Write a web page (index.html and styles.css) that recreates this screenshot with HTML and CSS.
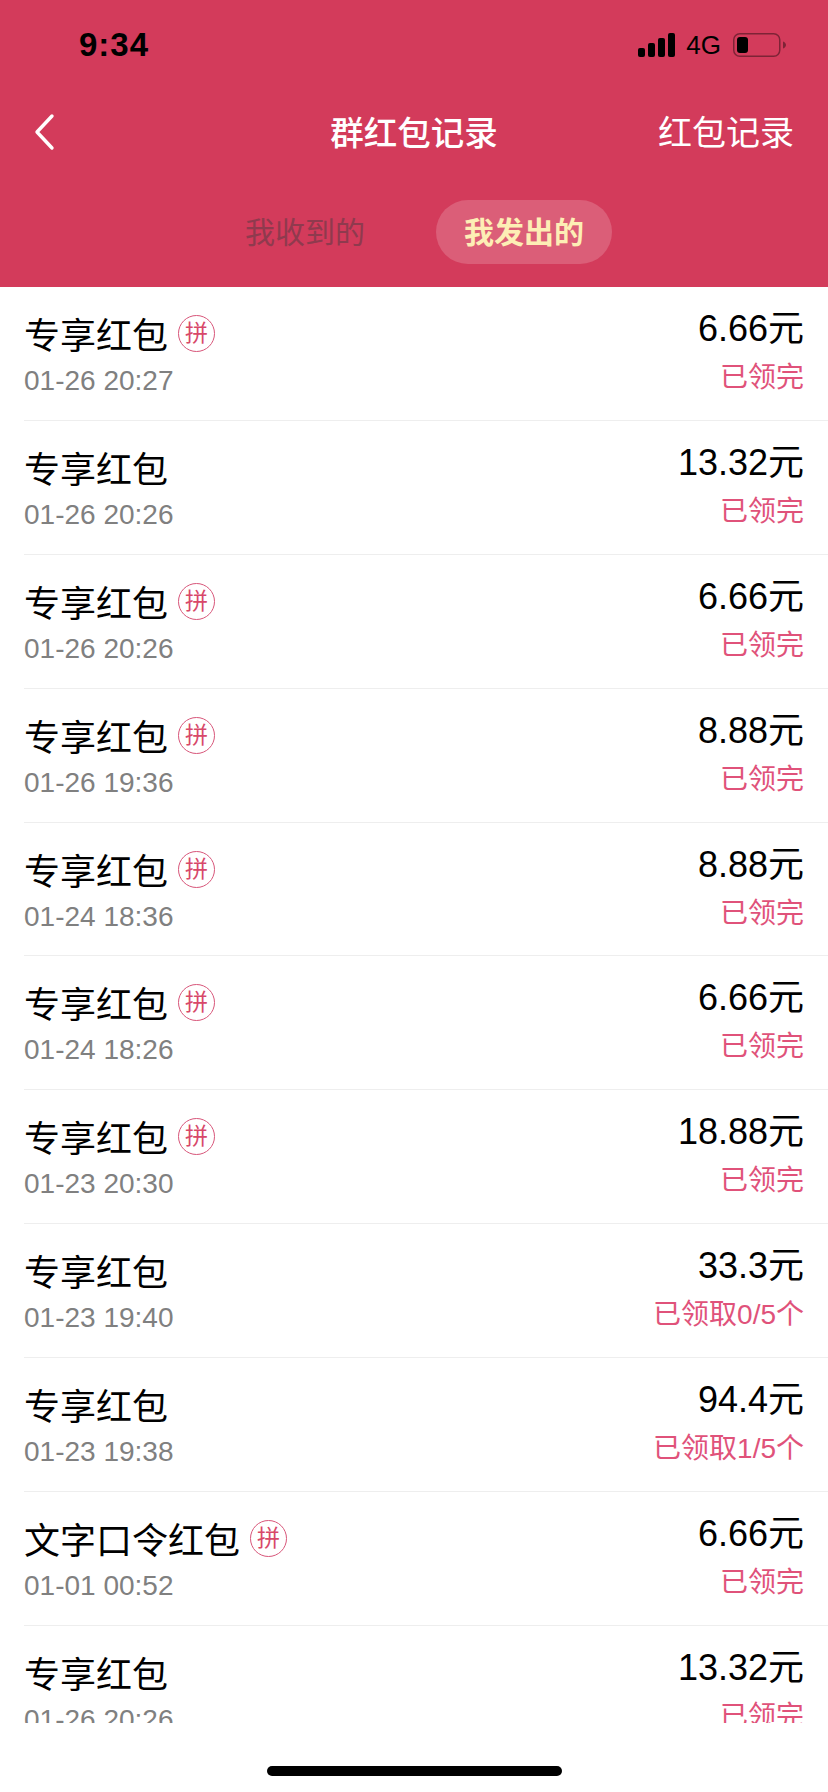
FILE: index.html
```html
<!DOCTYPE html>
<html lang="zh-CN">
<head>
  <meta charset="UTF-8" />
  <meta name="viewport" content="width=device-width, initial-scale=1.0"/>
  <title>群红包记录</title>
  <link rel="stylesheet" href="styles.css">
</head>
<body>
  <div class="header">
    <div class="status-bar">
      <span class="status-time">9:34</span>
      <div class="status-right">
        <svg class="signal" width="37" height="24" viewBox="0 0 37 24">
          <rect x="0" y="15" width="7" height="9" rx="2"/>
          <rect x="10" y="10" width="7" height="14" rx="2"/>
          <rect x="20" y="5" width="7" height="19" rx="2"/>
          <rect x="30" y="0" width="7" height="24" rx="2"/>
        </svg>
        <span class="status-net">4G</span>
        <svg class="battery" width="53" height="24" viewBox="0 0 53 24">
          <rect x="0.75" y="0.75" width="46" height="22.5" rx="6" fill="none" stroke="#000" stroke-opacity="0.4" stroke-width="1.5"/>
          <rect x="4" y="4" width="11" height="16" rx="3"/>
          <path d="M50 8.5c1.8.6 3 2 3 3.5s-1.2 2.9-3 3.5z" fill-opacity="0.4"/>
        </svg>
      </div>
    </div>

    <div class="nav">
      <svg class="nav-back" width="24" height="38" viewBox="0 0 24 38">
        <path d="M20 3L5 19l15 16" fill="none" stroke="#fff" stroke-width="3.4" stroke-linecap="round" stroke-linejoin="round"/>
      </svg>
      <span class="nav-title">群红包记录</span>
      <span class="nav-link">红包记录</span>
    </div>

    <div class="tabs">
      <span class="tab">我收到的</span>
      <span class="tab tab-active">我发出的</span>
    </div>
  </div>

  <div class="list">
    <div class="row">
      <div class="row-left">
        <div class="row-title">专享红包<span class="pin">拼</span></div>
        <div class="row-time">01-26 20:27</div>
      </div>
      <div class="row-right">
        <div class="row-amount">6.66元</div>
        <div class="row-status">已领完</div>
      </div>
    </div>
    <div class="row">
      <div class="row-left">
        <div class="row-title">专享红包</div>
        <div class="row-time">01-26 20:26</div>
      </div>
      <div class="row-right">
        <div class="row-amount">13.32元</div>
        <div class="row-status">已领完</div>
      </div>
    </div>
    <div class="row">
      <div class="row-left">
        <div class="row-title">专享红包<span class="pin">拼</span></div>
        <div class="row-time">01-26 20:26</div>
      </div>
      <div class="row-right">
        <div class="row-amount">6.66元</div>
        <div class="row-status">已领完</div>
      </div>
    </div>
    <div class="row">
      <div class="row-left">
        <div class="row-title">专享红包<span class="pin">拼</span></div>
        <div class="row-time">01-26 19:36</div>
      </div>
      <div class="row-right">
        <div class="row-amount">8.88元</div>
        <div class="row-status">已领完</div>
      </div>
    </div>
    <div class="row">
      <div class="row-left">
        <div class="row-title">专享红包<span class="pin">拼</span></div>
        <div class="row-time">01-24 18:36</div>
      </div>
      <div class="row-right">
        <div class="row-amount">8.88元</div>
        <div class="row-status">已领完</div>
      </div>
    </div>
    <div class="row">
      <div class="row-left">
        <div class="row-title">专享红包<span class="pin">拼</span></div>
        <div class="row-time">01-24 18:26</div>
      </div>
      <div class="row-right">
        <div class="row-amount">6.66元</div>
        <div class="row-status">已领完</div>
      </div>
    </div>
    <div class="row">
      <div class="row-left">
        <div class="row-title">专享红包<span class="pin">拼</span></div>
        <div class="row-time">01-23 20:30</div>
      </div>
      <div class="row-right">
        <div class="row-amount">18.88元</div>
        <div class="row-status">已领完</div>
      </div>
    </div>
    <div class="row">
      <div class="row-left">
        <div class="row-title">专享红包</div>
        <div class="row-time">01-23 19:40</div>
      </div>
      <div class="row-right">
        <div class="row-amount">33.3元</div>
        <div class="row-status">已领取0/5个</div>
      </div>
    </div>
    <div class="row">
      <div class="row-left">
        <div class="row-title">专享红包</div>
        <div class="row-time">01-23 19:38</div>
      </div>
      <div class="row-right">
        <div class="row-amount">94.4元</div>
        <div class="row-status">已领取1/5个</div>
      </div>
    </div>
    <div class="row">
      <div class="row-left">
        <div class="row-title">文字口令红包<span class="pin">拼</span></div>
        <div class="row-time">01-01 00:52</div>
      </div>
      <div class="row-right">
        <div class="row-amount">6.66元</div>
        <div class="row-status">已领完</div>
      </div>
    </div>
    <div class="row">
      <div class="row-left">
        <div class="row-title">专享红包</div>
        <div class="row-time">01-26 20:26</div>
      </div>
      <div class="row-right">
        <div class="row-amount">13.32元</div>
        <div class="row-status">已领完</div>
      </div>
    </div>
  </div>

  <div class="home-area">
    <div class="home-bar"></div>
  </div>
</body>
</html>
```

FILE: styles.css
```css
html, body {
  height: 1792px;
}

body {
  margin: 0;
  display: flex;
  flex-direction: column;
  overflow: hidden;
  background: #fff;
  font-family: "Liberation Sans", "Noto Sans CJK SC", sans-serif;
}

.header {
  height: 287px;
  flex: none;
  background: #d33b5b;
  display: flex;
  flex-direction: column;
}

.status-bar {
  height: 90px;
  display: flex;
  align-items: center;
  justify-content: space-between;
  padding: 0 42px 0 79px;
}

.status-time {
  font-size: 33px;
  font-weight: bold;
  letter-spacing: 1px;
  color: #000;
}

.status-right {
  display: flex;
  align-items: center;
}

.signal {
  margin-right: 11px;
}

.status-net {
  font-size: 26px;
  color: #000;
  margin-right: 12px;
}

.nav {
  height: 84px;
  display: flex;
  align-items: center;
  justify-content: space-between;
  padding: 0 34px 0 32px;
  color: #fff;
  position: relative;
}

.nav-title {
  position: absolute;
  left: 0;
  right: 0;
  padding-bottom: 4px;
  text-align: center;
  font-size: 33.5px;
  font-weight: 500;
}

.nav-link {
  padding-bottom: 3px;
  font-size: 34px;
}

.tabs {
  margin-top: 26px;
  display: flex;
  align-items: center;
  padding-left: 217px;
}

.tab {
  width: 176px;
  height: 64px;
  box-sizing: border-box;
  padding-bottom: 5px;
  border-radius: 32px;
  display: flex;
  align-items: center;
  justify-content: center;
  font-size: 30px;
  color: #8f3a4e;
}

.tab-active {
  margin-left: 43px;
  background: rgba(255, 255, 255, 0.18);
  color: #fdeeb5;
  font-weight: bold;
}

.list {
  height: 1436px;
  flex: none;
  overflow: hidden;
}

.row {
  height: 133.9px;
  box-sizing: border-box;
  margin-left: 24px;
  padding-right: 24px;
  border-bottom: 1px solid #eeeeee;
  display: flex;
  justify-content: space-between;
}

.row-left {
  padding-top: 28px;
}

.row-title {
  height: 44px;
  display: flex;
  align-items: center;
  font-size: 36px;
  line-height: 44px;
  color: #000;
}

.pin {
  width: 37px;
  height: 37px;
  box-sizing: border-box;
  margin: -7px 0 0 10px;
  border: 1.5px solid #d8567a;
  border-radius: 50%;
  display: flex;
  align-items: center;
  justify-content: center;
  font-size: 23px;
  line-height: 1;
  color: #d8486a;
}

.row-time {
  margin-top: 5px;
  font-size: 28px;
  line-height: 34px;
  color: #808080;
}

.row-right {
  padding-top: 20px;
  text-align: right;
}

.row-amount {
  font-size: 36px;
  line-height: 44px;
  color: #000;
}

.row-status {
  margin-top: 9px;
  font-size: 28px;
  line-height: 36px;
  color: #e0527a;
}

.home-area {
  flex: 1;
  padding-top: 43px;
  display: flex;
  justify-content: center;
}

.home-bar {
  width: 295px;
  height: 10px;
  border-radius: 5px;
  background: #000;
}
```
